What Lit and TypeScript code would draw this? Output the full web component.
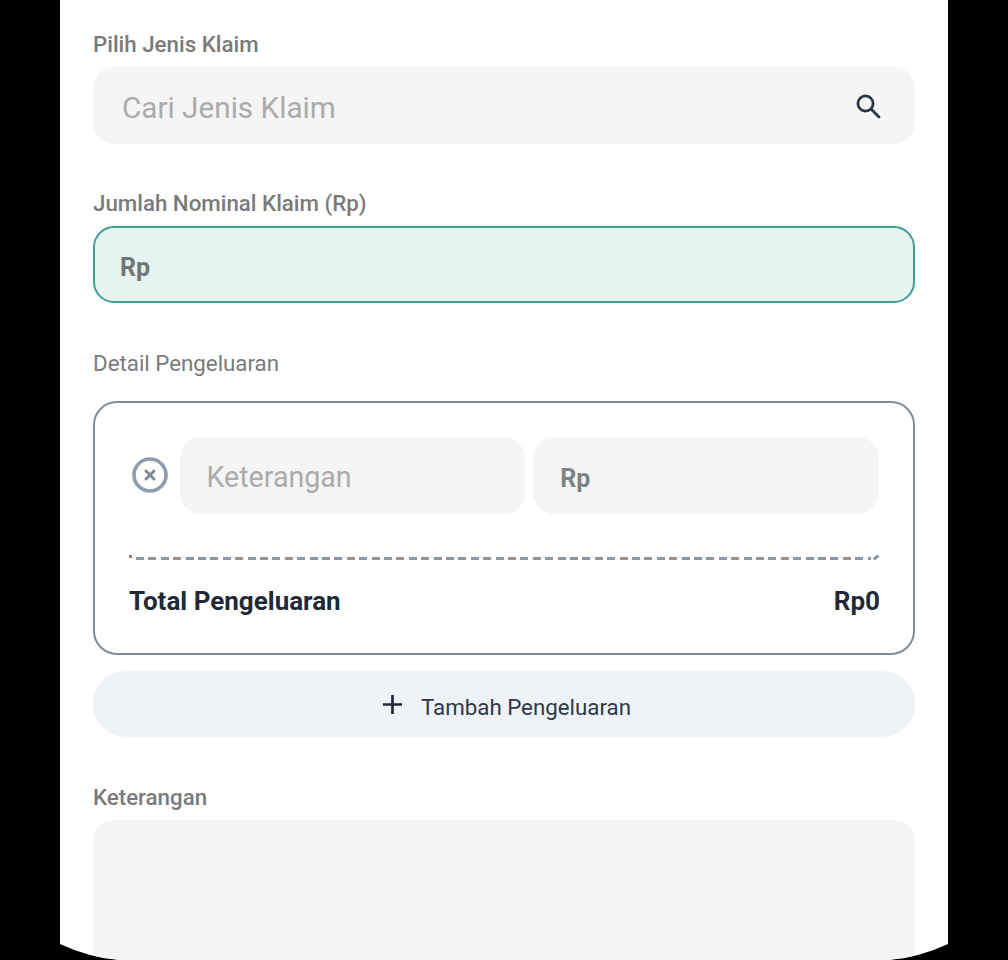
import { LitElement, html, css } from "lit";
import { customElement } from "lit/decorators.js";

@customElement("app-root")
export class AppRoot extends LitElement {
  static styles = css`
    :host { display: block; width: 1008px; height: 960px; background: #000; overflow: hidden; font-family: Roboto, "Noto Sans", sans-serif; }
    .frame {
      box-sizing: border-box; width: 888px; height: 960px; margin: 0 auto 0 60px; background: #fff;
      padding: 30px 33px 0; display: flex; flex-direction: column;
      clip-path: path("M0 0H888V944Q858 958 828 960H60Q30 958 0 944Z");
    }
    .label { font-size: 22.3px; line-height: 30px; font-weight: 500; color: #7a7a7a; margin: -1px 0 8px; }
    .label.plain { font-weight: 400; }
    .box { box-sizing: border-box; height: 77px; border-radius: 21px; background: #f5f5f5; display: flex; align-items: center; flex: none; }
    .search { padding: 0 32px 0 29px; justify-content: space-between; margin-bottom: 45px; }
    .ph { font-size: 29.7px; font-weight: 400; color: #ababab; padding-top: 3px; }
    .ph.small { font-size: 28.6px; padding-top: 2px; }
    .search svg { width: 30px; height: 30px; display: block; }
    .amount { background: #e5f3f1; border: 2.5px solid #429c98; padding-left: 25px; margin-bottom: 46px; }
    .rp { font-size: 25px; font-weight: 700; color: #6f7775; padding-top: 6px; }
    .card { box-sizing: border-box; height: 254px; margin-top: 15px; border: 2.5px solid #7f8b96; border-radius: 24px; padding: 34px 33px 0 33.5px; flex: none; }
    .row { display: flex; align-items: center; margin-right: 1px; }
    .row svg { width: 38px; height: 38px; flex: none; margin: 0 11px 0 2px; display: block; transform: translateY(-1px); }
    .row .box { flex: 1; padding-left: 27px; }
    .row .second { margin-left: 8px; }
    .rp.grey { color: #7c8287; }
    .dash {
      position: relative; height: 3px; margin: 43px 0 0 0;
      background: repeating-linear-gradient(90deg, #8f979f 0 8px, transparent 8px 12.4px);
      background-position: 7px 0; background-repeat: no-repeat; background-size: calc(100% - 16px) 100%;
    }
    .dash::before { content: ""; position: absolute; left: 0; top: -2px; width: 3px; height: 2.5px; background: #7f8890; }
    .dash::after { content: ""; position: absolute; right: 1px; top: -1px; width: 6px; height: 2.5px; background: #8b949c; transform: rotate(-35deg); }
    .total { display: flex; justify-content: space-between; align-items: center; margin: 24px 0 0 0.5px; font-size: 26px; line-height: 34px; font-weight: 700; color: #1f2937; }
    .add { box-sizing: border-box; height: 66px; margin: 16px 0 46px; padding-left: 5px; border-radius: 33px; background: #eff3f8; display: flex; align-items: center; justify-content: center; flex: none; font-size: 22.3px; color: #2f3847; }
    .add span { padding-top: 6px; }
    .add svg { width: 21px; height: 21px; margin-right: 18px; display: block; }
    .area { height: 240px; border-radius: 21px; background: #f5f5f5; flex: none; }
  `;

  render() {
    return html`
      <div class="frame">
        <div class="label">Pilih Jenis Klaim</div>
        <div class="box search">
          <span class="ph">Cari Jenis Klaim</span>
          <svg viewBox="0 0 30 30" fill="none" stroke="#2c3444" stroke-width="2.8" stroke-linecap="round">
            <circle cx="12.5" cy="12.5" r="7.6"></circle>
            <path d="M18.5 18.5L26 26"></path>
          </svg>
        </div>
        <div class="label">Jumlah Nominal Klaim (Rp)</div>
        <div class="box amount"><span class="rp">Rp</span></div>
        <div class="label plain">Detail Pengeluaran</div>
        <div class="card">
          <div class="row">
            <svg viewBox="0 0 38 38" fill="none" stroke="#8f9cab">
              <circle cx="19" cy="19" r="16" stroke-width="3.6"></circle>
              <path d="M15 15L23 23M23 15L15 23" stroke-width="3" stroke-linecap="round" stroke="#7d8a99"></path>
            </svg>
            <div class="box"><span class="ph small">Keterangan</span></div>
            <div class="box second"><span class="rp grey">Rp</span></div>
          </div>
          <div class="dash"></div>
          <div class="total"><span>Total Pengeluaran</span><span>Rp0</span></div>
        </div>
        <div class="box add">
          <svg viewBox="0 0 22 22" stroke="#1f2937" stroke-width="2.8"><path d="M11 1V21M1 11H21"></path></svg>
          <span>Tambah Pengeluaran</span>
        </div>
        <div class="label">Keterangan</div>
        <div class="area"></div>
      </div>
    `;
  }
}
